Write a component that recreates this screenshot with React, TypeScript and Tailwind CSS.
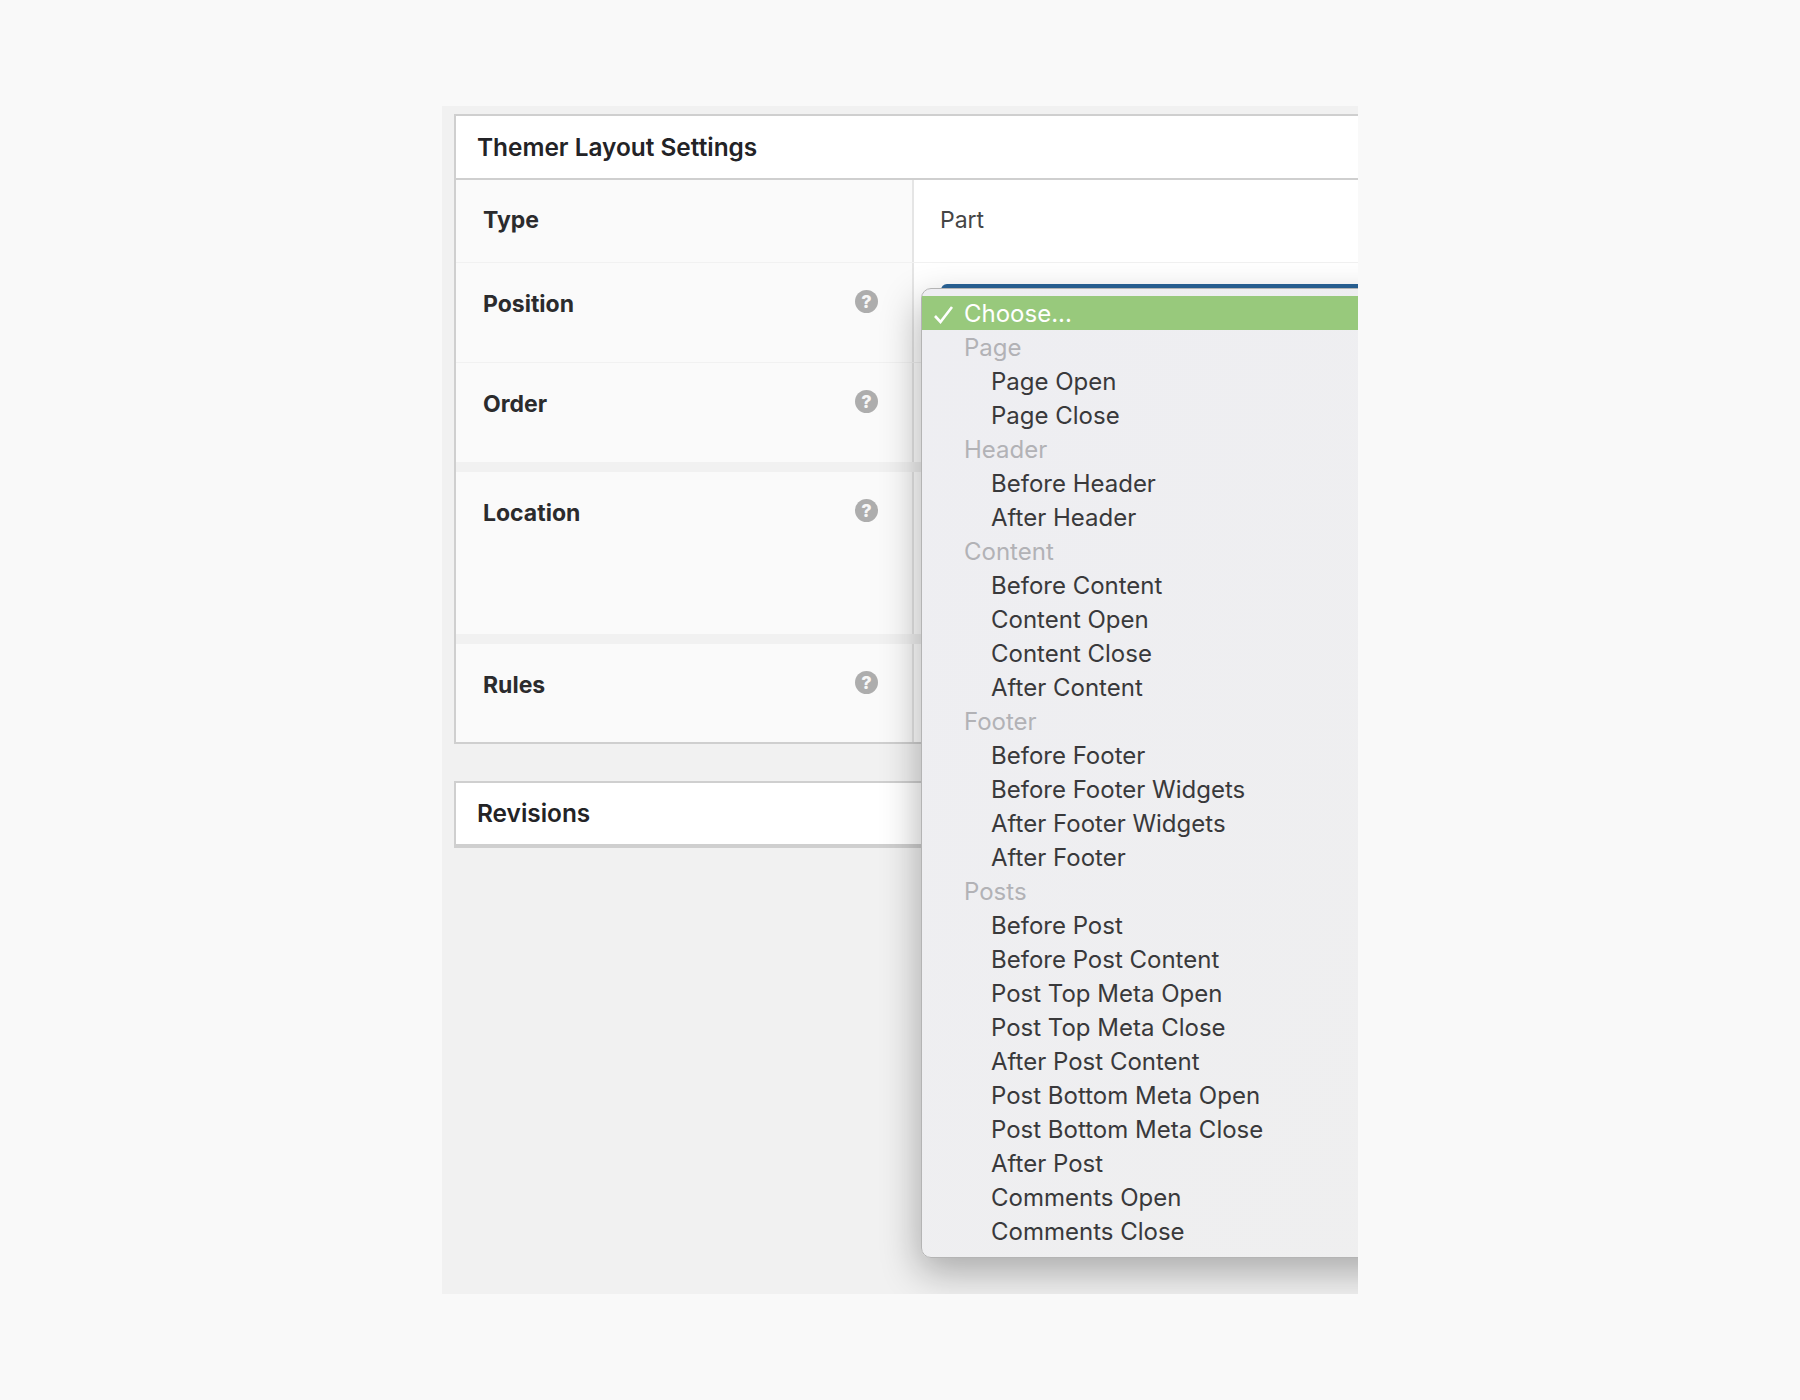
const menuGroups = [
  { label: 'Page', items: ['Page Open', 'Page Close'] },
  { label: 'Header', items: ['Before Header', 'After Header'] },
  { label: 'Content', items: ['Before Content', 'Content Open', 'Content Close', 'After Content'] },
  { label: 'Footer', items: ['Before Footer', 'Before Footer Widgets', 'After Footer Widgets', 'After Footer'] },
  {
    label: 'Posts',
    items: [
      'Before Post',
      'Before Post Content',
      'Post Top Meta Open',
      'Post Top Meta Close',
      'After Post Content',
      'Post Bottom Meta Open',
      'Post Bottom Meta Close',
      'After Post',
      'Comments Open',
      'Comments Close',
    ],
  },
];

function HelpIcon() {
  return (
    <span className="flex h-[23px] w-[23px] items-center justify-center rounded-full bg-[#adadad] text-[18px] font-extrabold leading-none text-[#f7f7f7]">
      ?
    </span>
  );
}

function SettingRow({ label, height, help = true, value, top = 'pt-[25px]' }: { label: string; height: string; help?: boolean; value?: string; top?: string }) {
  return (
    <div className={`flex border-b border-[#f1f1f1] ${height}`}>
      <div className={`flex w-[458px] shrink-0 items-start justify-between border-r-2 border-[#e5e5e5] bg-[#fafafa] pl-[27px] pr-[34px] ${top}`}>
        <span className="text-[23px] font-bold leading-[32px] text-[#2b2b2d]">{label}</span>
        {help && (
          <span className="mt-[2px]">
            <HelpIcon />
          </span>
        )}
      </div>
      <div className={`flex-1 bg-white pl-[26px] text-[23px] leading-[32px] text-[#454545] ${top}`}>{value}</div>
    </div>
  );
}

function Menu() {
  return (
    <div className="absolute left-[479px] top-[182px] w-[600px] rounded-[10px] border border-[#b4b4b4] bg-gradient-to-br from-[#eeeef2] to-[#efefef] pb-[9px] pt-[7px] text-[24px] leading-[36px] shadow-[-2px_14px_38px_rgba(0,0,0,0.3)]">
      <div className="relative h-[34px] bg-[#98c97c] pl-[42px] text-white">
        <svg className="absolute left-[11px] top-[10px] h-[18px] w-[21px]" viewBox="0 0 21 18" fill="none" stroke="white" strokeWidth="2.6">
          <path d="M2 10 L7.5 16 L19 1" />
        </svg>
        Choose...
      </div>
      {menuGroups.map((group) => (
        <div key={group.label}>
          <div className="h-[34px] pl-[42px] text-[#b2b2b6]">{group.label}</div>
          {group.items.map((item) => (
            <div key={item} className="h-[34px] pl-[69px] text-[#39393b]">
              {item}
            </div>
          ))}
        </div>
      ))}
    </div>
  );
}

export default function App() {
  return (
    <div className="h-[1400px] w-[1800px] bg-[#f9f9f9] pl-[442px] pt-[106px] font-['Inter',sans-serif]">
      <div className="relative h-[1188px] w-[916px] overflow-hidden bg-[#f1f1f1] pl-[12px] pt-[8px]">
        <div className="w-[1000px] border-2 border-[#cfcfcf] bg-white">
          <div className="flex h-[64px] items-center border-b-2 border-[#cfcfcf] pl-[21px] text-[24.4px] font-semibold text-[#232326]">
            Themer Layout Settings
          </div>
          <SettingRow label="Type" height="h-[83px]" help={false} value="Part" top="pt-[24px]" />
          <SettingRow label="Position" height="h-[100px]" />
          <SettingRow label="Order" height="h-[109px] border-b-[10px]" />
          <SettingRow label="Location" height="h-[172px] border-b-[10px]" />
          <SettingRow label="Rules" height="h-[98px] border-b-0" />
        </div>
        <div className="mt-[37px] w-[1000px] border-2 border-b-4 border-[#cfcfcf] bg-white">
          <div className="flex h-[61px] items-center pl-[21px] text-[24.4px] font-semibold text-[#232326]">Revisions</div>
        </div>
        <div className="absolute left-[499px] top-[178px] h-[30px] w-[500px] rounded-[6px] bg-[#2a6498]" />
        <Menu />
      </div>
    </div>
  );
}
